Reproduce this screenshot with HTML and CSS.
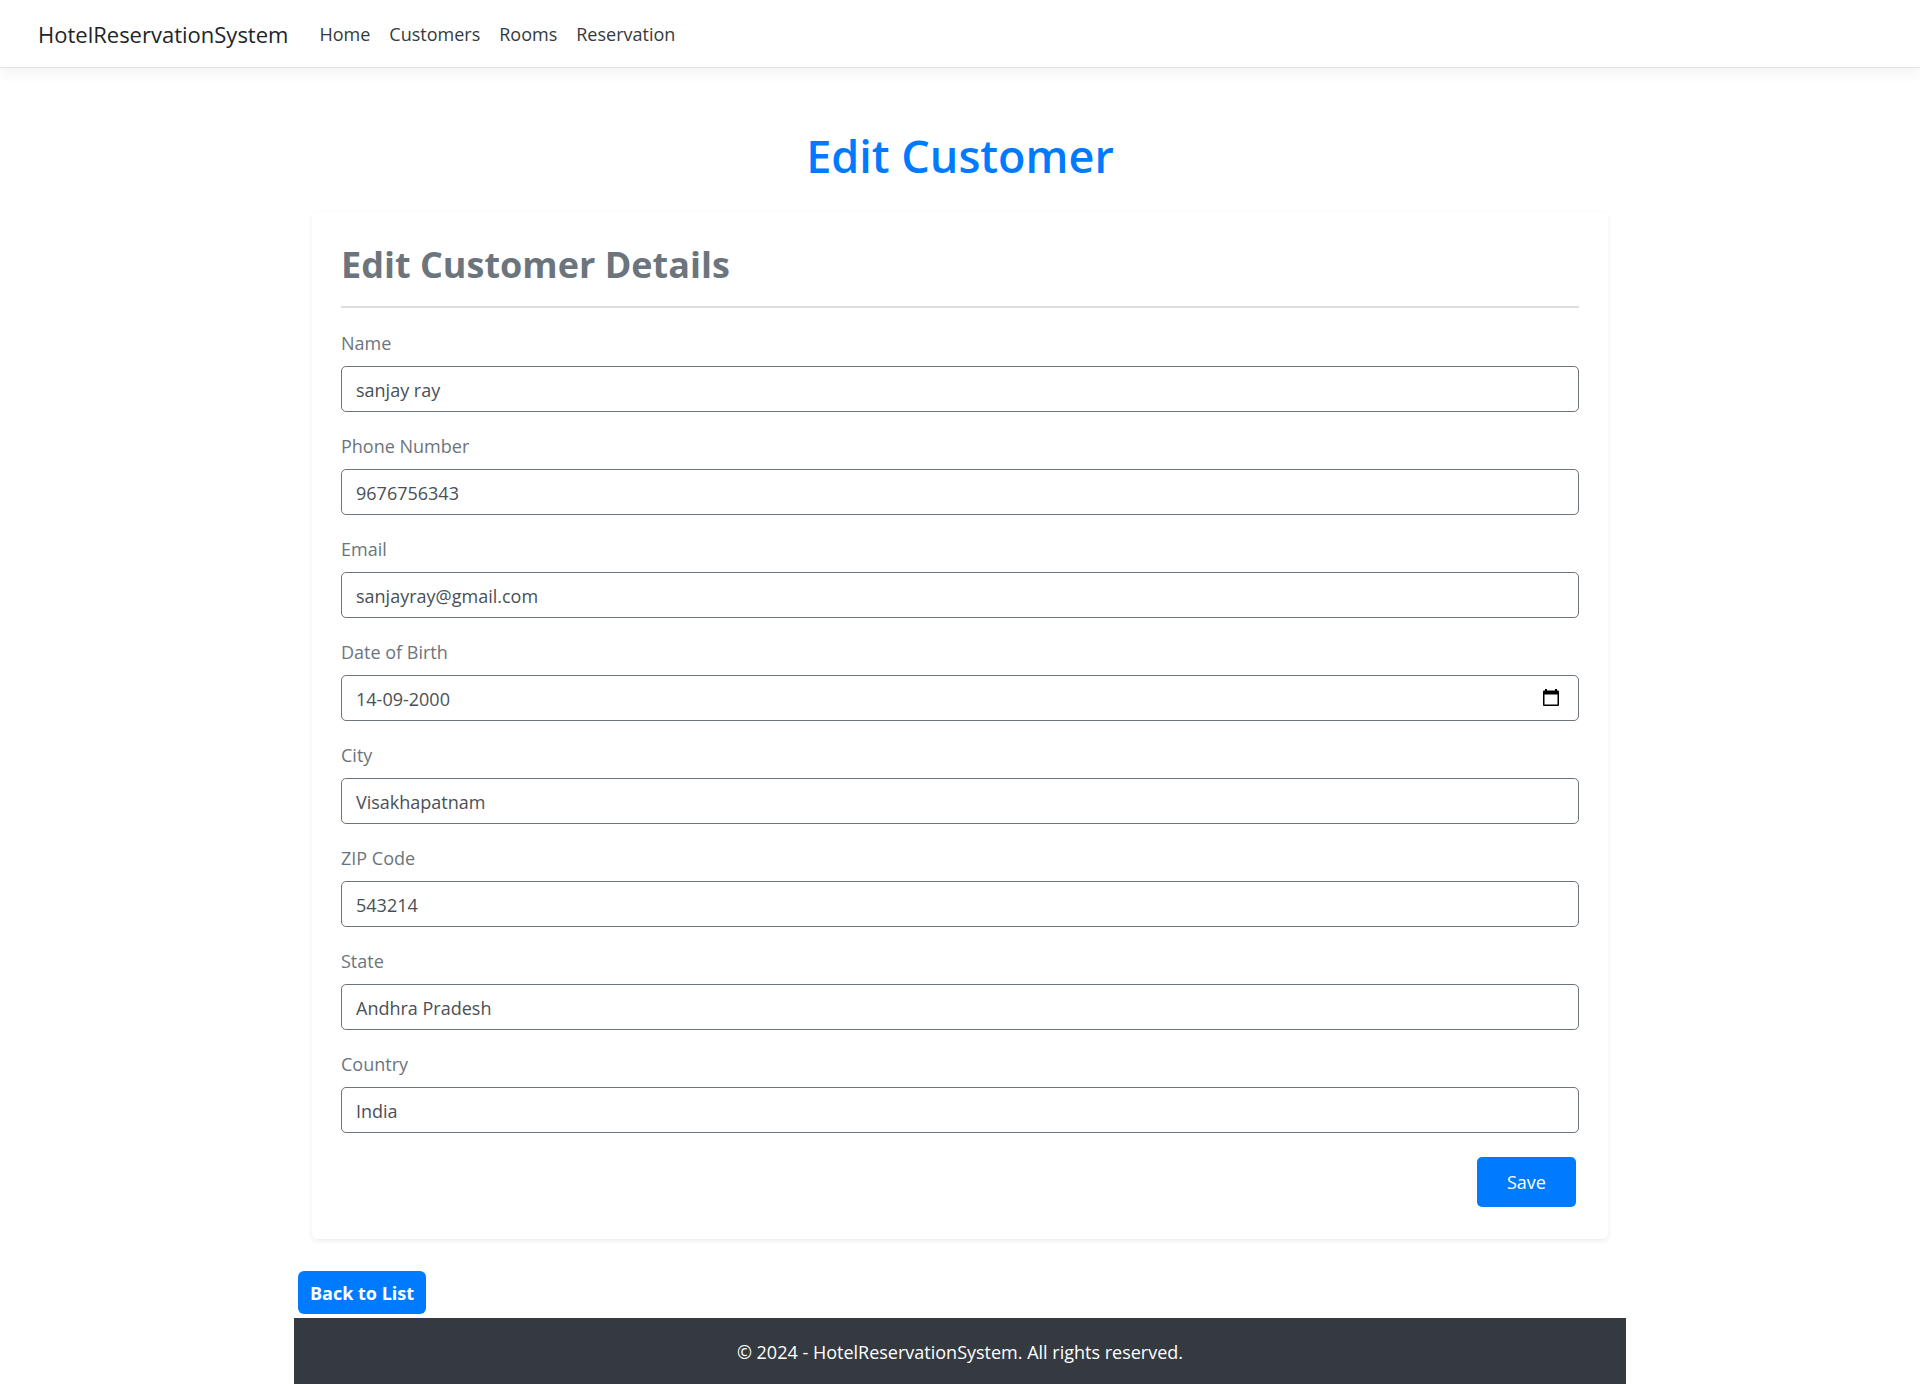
FILE: index.html
```html
<!DOCTYPE html>
<html lang="en">
<head>
<meta charset="utf-8">
<meta name="viewport" content="width=device-width, initial-scale=1">
<title>Edit Customer - HotelReservationSystem</title>
<link rel="stylesheet" href="styles.css">
</head>
<body>
<header class="site-header">
  <a class="brand" href="#">HotelReservationSystem</a>
  <nav class="nav">
    <a href="#">Home</a>
    <a href="#">Customers</a>
    <a href="#">Rooms</a>
    <a href="#">Reservation</a>
  </nav>
</header>
<div class="container">
  <main>
    <h1 class="page-title">Edit Customer</h1>
    <section class="card">
      <h2 class="card-title">Edit Customer Details</h2>
      <form class="form">
        <div class="field"><label for="name">Name</label><input class="control" id="name" type="text" value="sanjay ray"></div>
        <div class="field"><label for="phone">Phone Number</label><input class="control" id="phone" type="text" value="9676756343"></div>
        <div class="field"><label for="email">Email</label><input class="control" id="email" type="email" value="sanjayray@gmail.com"></div>
        <div class="field">
          <label for="dob">Date of Birth</label>
          <div class="date-box">
            <input class="control" id="dob" type="text" value="14-09-2000">
            <button class="picker" type="button" aria-label="Show date picker">
              <svg width="16" height="18" viewBox="0 0 16 18" aria-hidden="true"><path d="M2 0h2v1.500h8V0h2v1.500h1q1 0 1 1V16q0 1-1 1H1q-1 0-1-1V2.500q0-1 1-1h1zM1.500 5.500v10h13v-10z" fill="#000" fill-rule="evenodd"/></svg>
            </button>
          </div>
        </div>
        <div class="field"><label for="city">City</label><input class="control" id="city" type="text" value="Visakhapatnam"></div>
        <div class="field"><label for="zip">ZIP Code</label><input class="control" id="zip" type="text" value="543214"></div>
        <div class="field"><label for="state">State</label><input class="control" id="state" type="text" value="Andhra Pradesh"></div>
        <div class="field"><label for="country">Country</label><input class="control" id="country" type="text" value="India"></div>
        <button class="save" type="submit">Save</button>
      </form>
    </section>
    <a class="back" href="#">Back to List</a>
  </main>
  <footer class="footer">© 2024 - HotelReservationSystem. All rights reserved.</footer>
</div>
</body>
</html>
```
FILE: styles.css
```css
* { box-sizing: border-box; }

body {
  margin: 0;
  background: #fff;
  color: #212529;
  font-family: "Segoe UI", "Open Sans", "Noto Sans", sans-serif;
  font-size: 18px;
  line-height: 28px;
}

a { text-decoration: none; }

.site-header {
  display: flex;
  align-items: center;
  gap: 31px;
  min-height: 68px;
  padding: 0 38px;
  border-bottom: 1px solid #dee2e6;
  box-shadow: 0 5px 14px rgba(0, 0, 0, 0.05);
}

.brand { color: #212529; font-size: 22px; }

.nav { display: flex; gap: 19px; }
.nav a { color: #343a40; }

.container {
  max-width: 1332px;
  margin: 0 auto;
}

.page-title {
  margin: 0;
  padding: 59px 0 27px;
  color: #007bff;
  font-size: 45px;
  font-weight: 600;
  line-height: 58px;
  text-align: center;
}

.card {
  margin: 0 18px 32px;
  padding: 29px;
  border-radius: 5px;
  box-shadow: 0 2px 5px rgba(0, 0, 0, 0.08);
}

.card-title {
  margin: 0 0 21px;
  padding-bottom: 17px;
  border-bottom: 2px solid #ddd;
  color: #6c757d;
  font-size: 36px;
  font-weight: 700;
  line-height: 48px;
}

.form {
  display: flex;
  flex-direction: column;
  gap: 20px;
}

.field label {
  display: block;
  margin-bottom: 9px;
  color: #6c757d;
}

.control {
  display: block;
  width: 100%;
  height: 46px;
  margin: 0;
  padding: 2px 14px 0;
  border: 1px solid #6c757d;
  border-radius: 5px;
  background: #fff;
  color: #495057;
  font: inherit;
}

.date-box { position: relative; }

.picker {
  position: absolute;
  top: 14px;
  right: 20px;
  padding: 0;
  border: 0;
  background: none;
  line-height: 0;
}

.save {
  align-self: flex-end;
  min-width: 99px;
  height: 50px;
  margin: 4px 3px 3px;
  padding: 0 29px;
  border: 0;
  border-radius: 5px;
  background: #007bff;
  color: #fff;
  font: inherit;
}

.back {
  display: block;
  width: fit-content;
  margin: 0 4px 4px;
  padding: 8px 12px 7px;
  border-radius: 6px;
  background: #007bff;
  color: #fff;
  font-weight: 700;
}

.footer {
  padding: 20px 0 18px;
  background: #343a40;
  color: #fff;
  text-align: center;
}
```
